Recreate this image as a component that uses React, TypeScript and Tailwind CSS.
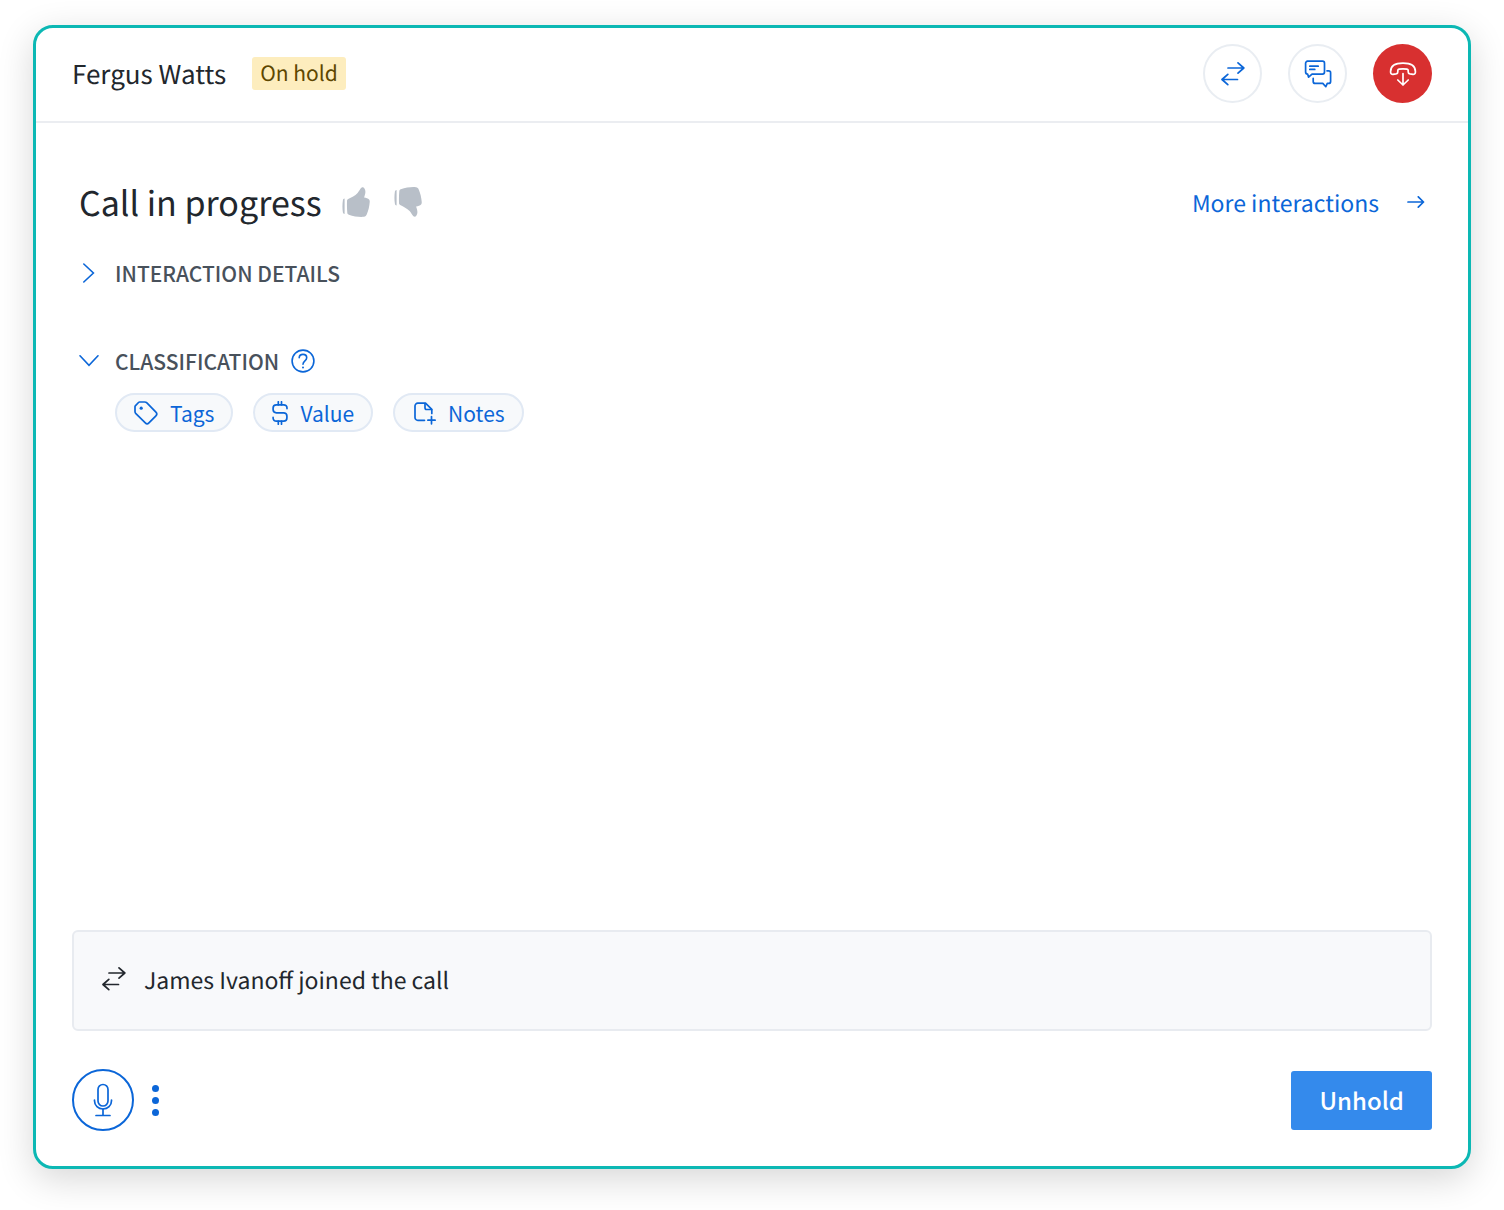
import React from 'react';

type IconProps = { className?: string };

const SwapIcon: React.FC<IconProps> = ({ className }) => (
  <svg
    className={className}
    viewBox="0 0 24 24"
    fill="none"
    stroke="currentColor"
    strokeWidth="1.7"
    strokeLinecap="round"
    strokeLinejoin="round"
    aria-hidden="true"
  >
    <path d="M7 6h15.800M17 .9 22.800 6 17 11.100" />
    <path d="M16.500 17.500H1M6.800 12.400 1 17.500l5.800 5.100" />
  </svg>
);

const ChatIcon: React.FC = () => (
  <svg
    className="size-7"
    viewBox="0 0 28 28"
    fill="none"
    stroke="currentColor"
    strokeWidth="1.7"
    strokeLinecap="round"
    strokeLinejoin="round"
    aria-hidden="true"
  >
    <path d="M3.200 1.200h15.300a2 2 0 0 1 2 2v8.900a2 2 0 0 1-2 2H8l-3.400 3.100-1-3.100a2 2 0 0 1-2-2V3.200a2 2 0 0 1 2-2" />
    <path d="M5.800 6.200h8.400M5.800 9.400h5" />
    <path d="M23 10.800h1.600a2 2 0 0 1 2 2v8.600a2 2 0 0 1-2 2h-1.300l-1.500 3.300-3-3.300h-7.600a2 2 0 0 1-2-2v-3" />
  </svg>
);

const HangUpIcon: React.FC = () => (
  <svg
    className="size-7"
    viewBox="0 0 28 28"
    fill="none"
    stroke="currentColor"
    strokeWidth="1.7"
    strokeLinecap="round"
    strokeLinejoin="round"
    aria-hidden="true"
  >
    <path d="M1.600 11.500C1.600 6 6.500 3.200 14 3.200s12.400 2.800 12.400 8.300v.8c0 1.300-1.100 2.100-2.400 2l-3-.4c-1.100-.2-1.800-1-1.800-2v-1.300c0-.8-.5-1.300-1.300-1.500-2.600-.4-5.200-.4-7.800 0-.8.2-1.300.7-1.300 1.500v1.300c0 1-.7 1.800-1.800 2l-3 .4c-1.300.1-2.400-.7-2.400-2z" />
    <path d="M14 13.500V25M8.800 20l5.200 5 5.200-5" />
  </svg>
);

const ThumbIcon: React.FC<IconProps> = ({ className }) => (
  <svg className={className} viewBox="0 0 28 30" fill="currentColor" aria-hidden="true">
    <path d="M2.600 11.500v15.600c-1-.2-1.500-.7-1.700-1.500-.6-4-.6-8.400 0-12.400.2-1 .7-1.500 1.700-1.700z" />
    <path d="M6.200 12.100C9.500 10.300 13 8.800 15.600 6c1.500-1.700 2.400-4 3.800-5.200 1-.8 2.200-.6 2.900.4 2 2.900.9 6.100-.2 9.200 2.100.3 3.900.8 5 2 .7.800.7 1.800.6 2.900-.3 4.100-1.300 8.300-3 12.300-.5 1.300-1.300 2-2.700 2.200-4.600.4-10.100-.3-15.200-2.100-.9-.3-1.400-.9-1.500-1.900-.4-3.900-.4-7.800-.3-11.600 0-1 .3-1.600 1.200-2.100z" />
  </svg>
);

const ChevronIcon: React.FC<IconProps> = ({ className }) => (
  <svg
    className={className}
    viewBox="0 0 20 20"
    fill="none"
    stroke="currentColor"
    strokeWidth="1.6"
    strokeLinecap="round"
    aria-hidden="true"
  >
    <path d="m4.800 1 9.600 9-9.600 9" />
  </svg>
);

const ArrowIcon: React.FC = () => (
  <svg
    className="w-[18px] h-3"
    viewBox="0 0 18 12"
    fill="none"
    stroke="currentColor"
    strokeWidth="1.7"
    strokeLinecap="round"
    strokeLinejoin="round"
    aria-hidden="true"
  >
    <path d="M1 6h15.500M11.300.8l5.200 5.200-5.200 5.200" />
  </svg>
);

const HelpIcon: React.FC = () => (
  <svg
    className="size-6"
    viewBox="0 0 24 24"
    fill="none"
    stroke="currentColor"
    strokeWidth="1.6"
    strokeLinecap="round"
    aria-hidden="true"
  >
    <circle cx="12" cy="12" r="10.900" />
    <path d="M8.200 8.800C8.300 6.700 9.800 5.400 12 5.400s3.700 1.400 3.700 3.300c0 3.200-3.700 3-3.700 6.500" />
    <circle cx="12" cy="18.600" r="1" fill="currentColor" stroke="none" />
  </svg>
);

const TagIcon: React.FC = () => (
  <svg
    className="size-6"
    viewBox="0 0 24 24"
    fill="none"
    stroke="currentColor"
    strokeWidth="1.7"
    strokeLinejoin="round"
    aria-hidden="true"
  >
    <path d="M1.300 4.800 4.500 1.500C4.800 1.200 5.200 1 5.600 1h5c.9 0 1.700.3 2.300.9l9 9.300c1.100 1.100 1.100 2.500 0 3.600l-7 7.100c-1.100 1.100-2.500 1.100-3.600 0L1.900 12.700c-.6-.6-.9-1.400-.9-2.300V5.600c0-.3.100-.6.300-.8z" />
    <circle cx="7.200" cy="7.200" r="1.600" fill="currentColor" stroke="none" />
  </svg>
);

const DollarIcon: React.FC = () => (
  <svg
    className="w-4 h-6"
    viewBox="0 0 16 24"
    fill="none"
    stroke="currentColor"
    strokeWidth="1.700"
    strokeLinecap="round"
    aria-hidden="true"
  >
    <path d="M15 7.600V7c0-1.900-1.400-3.200-3.300-3.200H4.400C2.500 3.800 1.100 5.100 1.100 7v1.600c0 1.900 1.400 3.200 3.300 3.200h7.200c1.900 0 3.300 1.300 3.300 3.200v2c0 1.900-1.400 3.200-3.300 3.200H4.400c-1.900 0-3.300-1.300-3.300-3.200v-.6" />
    <path d="M6.300.8v3M9.500.8v3M6.300 20.200v3M9.500 20.200v3" />
  </svg>
);

const NoteIcon: React.FC = () => (
  <svg
    className="size-6"
    viewBox="0 0 24 24"
    fill="none"
    stroke="currentColor"
    strokeWidth="1.7"
    strokeLinecap="round"
    strokeLinejoin="round"
    aria-hidden="true"
  >
    <path d="M12.500 19.300H5.800A2.800 2.800 0 0 1 3 16.500V5a2.800 2.800 0 0 1 2.800-2.800h7.700L19.800 8.400v4" />
    <path d="M13 2.500v4.300c0 1.100.6 1.700 1.700 1.700h4.900" />
    <path d="M19.500 15.600v7.200M15.900 19.200h7.200" />
  </svg>
);

const MicIcon: React.FC = () => (
  <svg
    className="w-5 h-9"
    viewBox="0 0 20 36"
    fill="none"
    stroke="currentColor"
    strokeWidth="1.7"
    strokeLinecap="round"
    aria-hidden="true"
  >
    <rect x="5" y="2.500" width="10" height="21.500" rx="5" />
    <path d="M1.500 18v.7c0 4.900 3.700 8.300 8.500 8.300s8.500-3.400 8.500-8.300V18" />
    <path d="M10 27v6.300M3 33.500h14" />
  </svg>
);

const chips = [
  { label: 'Tags', icon: TagIcon },
  { label: 'Value', icon: DollarIcon },
  { label: 'Notes', icon: NoteIcon },
];

const Header: React.FC = () => (
  <header className="flex items-center justify-between border-b-2 border-[#ebedf1] px-9 pt-4 pb-[18px]">
    <div className="flex items-center gap-[26px]">
      <h1 className="text-[26px] leading-8">Fergus Watts</h1>
      <span className="rounded-[3px] bg-[#fdedbe] px-2 text-[21px] leading-[33px] text-[#5e4700]">On hold</span>
    </div>
    <div className="flex gap-[26px]">
      <button
        aria-label="Transfer"
        className="flex size-[59px] items-center justify-center rounded-full border-2 border-[#e9edf2] text-[#0b66d8]"
      >
        <SwapIcon className="size-6" />
      </button>
      <button
        aria-label="Chat"
        className="flex size-[59px] items-center justify-center rounded-full border-2 border-[#e9edf2] text-[#0b66d8]"
      >
        <ChatIcon />
      </button>
      <button
        aria-label="Hang up"
        className="flex size-[59px] items-center justify-center rounded-full bg-[#d83030] text-white"
      >
        <HangUpIcon />
      </button>
    </div>
  </header>
);

const CallDetails: React.FC = () => (
  <section className="px-[7px]">
    <div className="flex items-center justify-between">
      <div className="flex items-center">
        <h2 className="text-[34px] leading-[46px]">Call in progress</h2>
        <button aria-label="Good call" className="ml-5 text-[#b8bfc8]">
          <ThumbIcon className="w-7 h-[30px]" />
        </button>
        <button aria-label="Bad call" className="ml-6 text-[#b8bfc8]">
          <ThumbIcon className="w-7 h-[30px] -scale-y-100" />
        </button>
      </div>
      <a href="#interactions" className="flex items-center gap-7 text-[23px] leading-8 text-[#0b66d8]">
        More interactions
        <ArrowIcon />
      </a>
    </div>

    <button aria-expanded="false" className="mt-8 flex items-center gap-4 text-[#48515b]">
      <ChevronIcon className="size-5 text-[#0b66d8]" />
      <span className="text-[21px] leading-8 font-medium">INTERACTION DETAILS</span>
    </button>

    <div className="mt-14 flex items-center gap-3">
      <button aria-expanded="true" className="flex items-center gap-4 text-[#48515b]">
        <ChevronIcon className="size-5 rotate-90 text-[#0b66d8]" />
        <span className="text-[21px] leading-8 font-medium">CLASSIFICATION</span>
      </button>
      <button aria-label="Help" className="text-[#0b66d8]">
        <HelpIcon />
      </button>
    </div>
    <div className="mt-4 ml-9 flex gap-5">
      {chips.map((chip) => (
        <button
          key={chip.label}
          className="flex h-[39px] items-center gap-3 rounded-full border-2 border-[#e1e9f4] bg-[#f7f9fb] px-[17px] text-[21px] leading-8 text-[#0b66d8]"
        >
          <chip.icon />
          {chip.label}
        </button>
      ))}
    </div>
  </section>
);

export default function App() {
  return (
    <div className="flex min-h-screen bg-white px-[33px] pt-[25px] pb-[41px] font-['Noto_Sans_CJK_JP','Noto_Sans_CJK_SC',sans-serif] text-[#22272d] [text-rendering:geometricPrecision]">
      <main className="flex flex-1 flex-col rounded-[20px] border-3 border-[#0cb8b4] bg-white shadow-[0_10px_36px_rgba(0,0,0,0.16)]">
        <Header />
        <div className="flex flex-1 flex-col px-9 pt-14 pb-[35px]">
          <CallDetails />
          <div className="mt-auto flex h-[101px] items-center gap-[18px] rounded-md border-2 border-[#e8ebf0] bg-[#f8f9fb] px-7 pb-1">
            <SwapIcon className="size-6" />
            <p className="text-[23px] leading-8">James Ivanoff joined the call</p>
          </div>
          <div className="mt-[38px] flex items-center justify-between">
            <div className="flex items-center gap-4">
              <button
                aria-label="Mute"
                className="flex size-[62px] items-center justify-center rounded-full border-2 border-[#0b66d8] text-[#0b66d8]"
              >
                <MicIcon />
              </button>
              <button aria-label="More options" className="flex flex-col gap-[5px] px-0.5">
                <span className="size-[7px] rounded-full bg-[#0b66d8]" />
                <span className="size-[7px] rounded-full bg-[#0b66d8]" />
                <span className="size-[7px] rounded-full bg-[#0b66d8]" />
              </button>
            </div>
            <button className="h-[59px] rounded-[3px] bg-[#348aec] px-7 text-[24px] leading-8 font-medium text-white">
              Unhold
            </button>
          </div>
        </div>
      </main>
    </div>
  );
}
